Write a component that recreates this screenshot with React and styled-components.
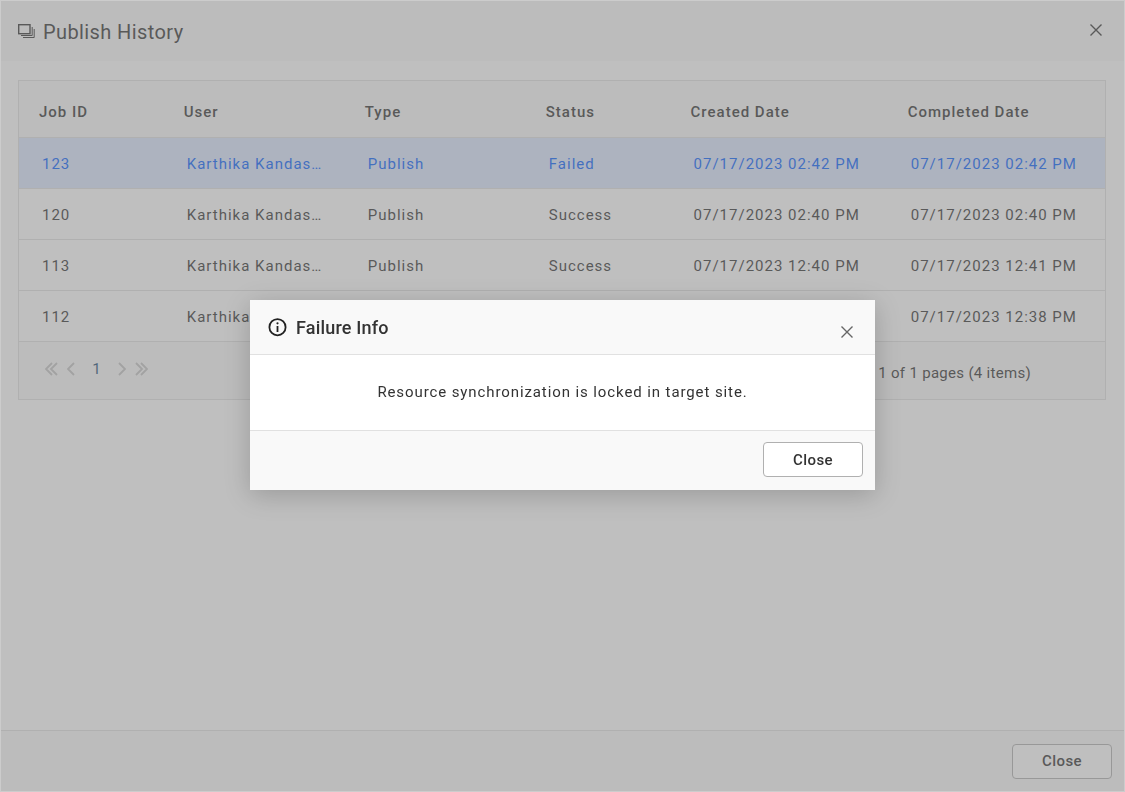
import React from "react";
import styled, { createGlobalStyle } from "styled-components";

const GlobalStyle = createGlobalStyle`
  *, *::before, *::after { box-sizing: border-box; }
  body {
    margin: 0;
    font-family: Roboto, "Liberation Sans", sans-serif;
    font-size: 15px;
    line-height: 20px;
    letter-spacing: 0.03em;
    color: #333;
    background: #fff;
  }
  button { font: inherit; letter-spacing: inherit; color: inherit; }
  h1, h2, p { margin: 0; }
`;

const Page = styled.main`
  display: flex;
  flex-direction: column;
  min-height: 100vh;
  border: 1px solid #fff;
  background: #fff;
`;

const PageHeader = styled.header`
  display: flex;
  align-items: center;
  justify-content: space-between;
  height: 60px;
  padding: 0 20px 0 17px;
  background: #f9f9f9;
`;

const PageTitle = styled.h1`
  display: flex;
  align-items: center;
  gap: 8px;
  padding-top: 2px;
  font-size: 20px;
  font-weight: 400;
  line-height: 24px;
  letter-spacing: 0.02em;
`;

const IconButton = styled.button`
  display: flex;
  padding: 0;
  border: 0;
  background: none;
  cursor: pointer;
`;

const PageClose = styled(IconButton)`
  padding-bottom: 2px;
`;

const Content = styled.section`
  flex: 1;
  padding: 19px 18px 19px 17px;
`;

const GridBox = styled.div`
  border: 1px solid #e1e1e1;
`;

const Table = styled.table`
  width: 100%;
  table-layout: fixed;
  border-collapse: separate;
  border-spacing: 0;
  letter-spacing: 1px;
`;

const HeadCell = styled.th`
  height: 57px;
  padding: 5px 20px 0 20px;
  border-bottom: 1px solid #e1e1e1;
  background: #f9f9f9;
  font-weight: 500;
  text-align: left;
  white-space: nowrap;
`;

const Row = styled.tr`
  background: ${(p) => (p.$selected ? "#dbe7ff" : "#fff")};
  color: ${(p) => (p.$selected ? "#0561ff" : "#333")};
`;

const Cell = styled.td`
  height: 51px;
  padding: 2px 20px 0 23px;
  border-bottom: 1px solid #e1e1e1;
  overflow: hidden;
  text-overflow: ellipsis;
  white-space: nowrap;
`;

const Pager = styled.nav`
  display: flex;
  justify-content: space-between;
  height: 57px;
  padding: 17px 74px 0 26px;
  background: #f9f9f9;
  letter-spacing: 0.02em;
`;

const PagerButtons = styled.div`
  display: flex;
  align-items: center;
  gap: 9px;
  height: 20px;
  color: #c4c4c4;
`;

const CurrentPage = styled.span`
  width: 25px;
  text-align: center;
  color: #1f4f77;
`;

const PagerInfo = styled.p`
  padding-top: 4px;
`;

const PageFooter = styled.footer`
  display: flex;
  align-items: center;
  justify-content: flex-end;
  height: 61px;
  padding: 0 12px;
  border-top: 1px solid #e1e1e1;
  background: #f9f9f9;
`;

const Button = styled.button`
  width: 100px;
  height: 35px;
  border: 1px solid #b0b0b0;
  border-radius: 4px;
  background: #fff;
  font-weight: 500;
  cursor: pointer;
`;

const Overlay = styled.div`
  position: fixed;
  inset: 0;
  display: flex;
  align-items: center;
  justify-content: center;
  padding-bottom: 2px;
  border: 1px solid rgba(255, 255, 255, 0.2);
  background: rgba(127, 127, 127, 0.5);
`;

const Dialog = styled.div`
  width: 625px;
  max-width: 100%;
  background: #fff;
  box-shadow: 0 5px 25px rgba(0, 0, 0, 0.2);
`;

const DialogHeader = styled.header`
  display: flex;
  align-items: center;
  justify-content: space-between;
  height: 55px;
  padding: 0 20px 0 18px;
  border-bottom: 1px solid #e1e1e1;
  background: #f9f9f9;
`;

const DialogTitle = styled.h2`
  display: flex;
  align-items: center;
  gap: 9px;
  padding-top: 2px;
  font-size: 18px;
  font-weight: 500;
  line-height: 24px;
  letter-spacing: 0.01em;
`;

const DialogClose = styled(IconButton)`
  padding-top: 10px;
`;

const DialogBody = styled.p`
  padding: 27px 20px 28px;
  letter-spacing: 0.06em;
  text-align: center;
`;

const DialogFooter = styled.footer`
  display: flex;
  justify-content: flex-end;
  height: 60px;
  padding: 11px 12px;
  border-top: 1px solid #e1e1e1;
  background: #f9f9f9;
`;

const CloseIcon = ({ color = "#333" }) => (
  <svg width="16" height="16" viewBox="0 0 16 16" fill="none" stroke={color} strokeWidth="1.4">
    <path d="M2.5 2.5 13.5 13.5M13.5 2.5 2.5 13.5" />
  </svg>
);

const StackIcon = () => (
  <svg width="17" height="16" viewBox="0 0 17 16" fill="none" stroke="#333">
    <rect x="0.7" y="0.7" width="11.3" height="9" strokeWidth="1.4" />
    <path d="M14.2 3V11.5H3M16.2 5V13.5H5" />
  </svg>
);

const InfoIcon = () => (
  <svg width="19" height="21" viewBox="0 0 19 21" fill="none">
    <circle cx="9.5" cy="9.2" r="8.1" stroke="#222" strokeWidth="1.8" />
    <path d="M9.5 8V14" stroke="#222" strokeWidth="1.8" />
    <circle cx="9.5" cy="5.3" r="1.1" fill="#222" />
  </svg>
);

const Chevron = ({ double, right }) => (
  <svg width={double ? 13 : 8} height="14" viewBox={double ? "0 0 13 14" : "0 0 8 14"} fill="none" stroke="currentColor" strokeWidth="1.8">
    {right ? <path d="M1 1 7 7 1 13" /> : <path d="M7 1 1 7 7 13" />}
    {double && (right ? <path d="M6 1 12 7 6 13" /> : <path d="M12 1 6 7 12 13" />)}
  </svg>
);

const columns = [
  { name: "Job ID", width: "13.333%" },
  { name: "User", width: "16.667%" },
  { name: "Type", width: "16.667%" },
  { name: "Status", width: "13.333%" },
  { name: "Created Date", width: "20%" },
  { name: "Completed Date", width: "20%" },
];

const user = "Karthika Kandasamy";
const jobs = [
  ["123", user, "Publish", "Failed", "07/17/2023 02:42 PM", "07/17/2023 02:42 PM"],
  ["120", user, "Publish", "Success", "07/17/2023 02:40 PM", "07/17/2023 02:40 PM"],
  ["113", user, "Publish", "Success", "07/17/2023 12:40 PM", "07/17/2023 12:41 PM"],
  ["112", user, "Publish", "Success", "07/17/2023 12:38 PM", "07/17/2023 12:38 PM"],
];

export default function App() {
  return (
    <>
      <GlobalStyle />
      <Page>
        <PageHeader>
          <PageTitle>
            <StackIcon />
            Publish History
          </PageTitle>
          <PageClose aria-label="Close publish history">
            <CloseIcon />
          </PageClose>
        </PageHeader>
        <Content>
          <GridBox>
            <Table>
              <colgroup>
                {columns.map((c) => (
                  <col key={c.name} width={c.width} />
                ))}
              </colgroup>
              <thead>
                <tr>
                  {columns.map((c) => (
                    <HeadCell key={c.name} scope="col">{c.name}</HeadCell>
                  ))}
                </tr>
              </thead>
              <tbody>
                {jobs.map((job, i) => (
                  <Row key={job[0]} $selected={i === 0}>
                    {job.map((value, j) => (
                      <Cell key={columns[j].name}>{value}</Cell>
                    ))}
                  </Row>
                ))}
              </tbody>
            </Table>
            <Pager aria-label="Pages">
              <PagerButtons>
                <IconButton aria-label="First page"><Chevron double /></IconButton>
                <IconButton aria-label="Previous page"><Chevron /></IconButton>
                <CurrentPage>1</CurrentPage>
                <IconButton aria-label="Next page"><Chevron right /></IconButton>
                <IconButton aria-label="Last page"><Chevron double right /></IconButton>
              </PagerButtons>
              <PagerInfo>1 of 1 pages (4 items)</PagerInfo>
            </Pager>
          </GridBox>
        </Content>
        <PageFooter>
          <Button>Close</Button>
        </PageFooter>
      </Page>
      <Overlay>
        <Dialog role="dialog" aria-modal="true" aria-labelledby="failure-title">
          <DialogHeader>
            <DialogTitle id="failure-title">
              <InfoIcon />
              Failure Info
            </DialogTitle>
            <DialogClose aria-label="Close failure info">
              <CloseIcon color="#666" />
            </DialogClose>
          </DialogHeader>
          <DialogBody>Resource synchronization is locked in target site.</DialogBody>
          <DialogFooter>
            <Button>Close</Button>
          </DialogFooter>
        </Dialog>
      </Overlay>
    </>
  );
}
